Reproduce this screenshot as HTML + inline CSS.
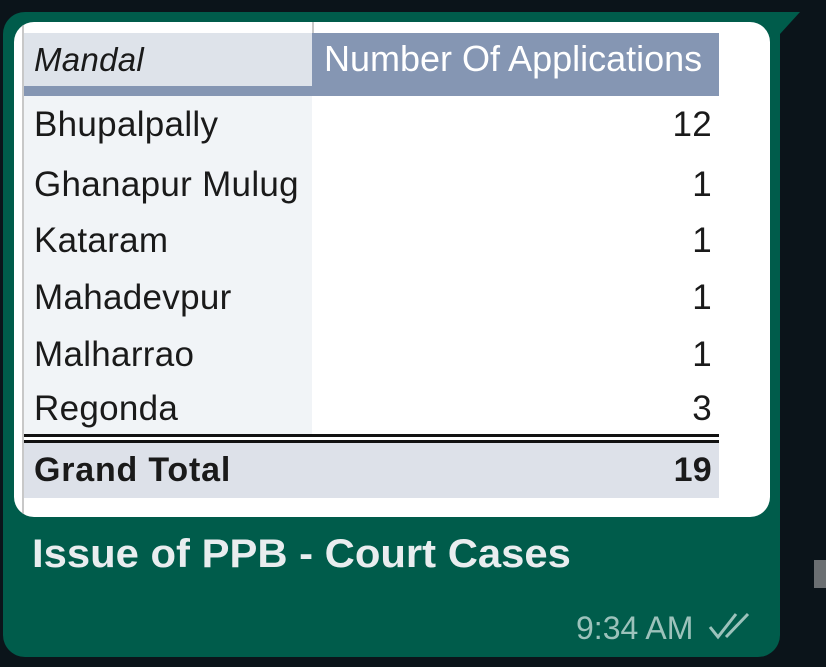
<!DOCTYPE html>
<html><head><style>
body{margin:0;width:826px;height:667px;background:#0b141a;position:relative;overflow:hidden;font-family:"Liberation Sans",Arial,sans-serif}
.bub{position:absolute;left:3px;top:12px;width:777px;height:645px;background:#005c4b;border-radius:22px 0 22px 22px}
.tail{position:absolute;left:780px;top:12px;width:0;height:0;border-top:22px solid #005c4b;border-right:20px solid transparent}
.img{position:absolute;left:14px;top:22px;width:756px;height:495px;background:#fff;border-radius:20px;overflow:hidden}
.a{position:absolute}
.t{position:absolute;font-size:35px;color:#1a1a1a;line-height:1;letter-spacing:0.3px}
.cap{position:absolute;left:32px;top:532px;font-size:40px;font-weight:bold;color:#e9edef;transform:scaleX(1.045);transform-origin:left}
.time{position:absolute;left:576px;top:610px;font-size:32px;color:#9cc2bb}
</style></head><body>
<div class="bub"></div><div class="tail"></div>
<div class="img">
 <div class="a" style="left:8px;top:0;width:2px;height:495px;background:#c8c8c8"></div>
 <div class="a" style="left:298px;top:0;width:2px;height:12px;background:#c8c8c8"></div>
 <div class="a" style="left:10px;top:11px;width:296px;height:63px;background:#dee3ea"></div>
 <div class="a" style="left:298px;top:11px;width:407px;height:63px;background:#8596b3"></div>
 <div class="a" style="left:10px;top:64px;width:695px;height:10px;background:#8596b3"></div>
 <div class="a" style="left:10px;top:74px;width:288px;height:338px;background:#f1f4f7"></div>
 <div class="a" style="left:10px;top:412px;width:695px;height:3px;background:#111"></div>
 <div class="a" style="left:10px;top:418px;width:695px;height:3px;background:#111"></div>
 <div class="a" style="left:10px;top:421px;width:695px;height:55px;background:#dde1e9"></div>
 <div class="t" style="left:20px;top:21px;font-style:italic;font-size:33px">Mandal</div>
 <div class="t" style="left:310px;top:19px;color:#fff;font-size:36px;letter-spacing:0">Number Of Applications</div>
 <div class="t" style="left:20px;top:85px">Bhupalpally</div>
 <div class="t" style="left:20px;top:145px">Ghanapur Mulug</div>
 <div class="t" style="left:20px;top:201px">Kataram</div>
 <div class="t" style="left:20px;top:258px">Mahadevpur</div>
 <div class="t" style="left:20px;top:315px">Malharrao</div>
 <div class="t" style="left:20px;top:369px">Regonda</div>
 <div class="t" style="left:20px;top:431px;font-weight:bold;font-size:34px;letter-spacing:0.8px">Grand Total</div>
 <div class="t" style="right:58px;top:85px">12</div>
 <div class="t" style="right:58px;top:145px">1</div>
 <div class="t" style="right:58px;top:201px">1</div>
 <div class="t" style="right:58px;top:258px">1</div>
 <div class="t" style="right:58px;top:315px">1</div>
 <div class="t" style="right:58px;top:369px">3</div>
 <div class="t" style="right:58px;top:431px;font-weight:bold;font-size:34px">19</div>
</div>
<div class="cap">Issue of PPB - Court Cases</div>
<div class="time">9:34 AM</div>
<svg class="a" style="left:708px;top:612px" width="48" height="28" viewBox="0 0 48 28"><path d="M2 15 L10 25 L28 2 M18 25 L40 2" stroke="#9cc2bb" stroke-width="3" fill="none"/></svg>
<div class="a" style="left:814px;top:560px;width:12px;height:28px;background:#6b6f72"></div>
</body></html>
